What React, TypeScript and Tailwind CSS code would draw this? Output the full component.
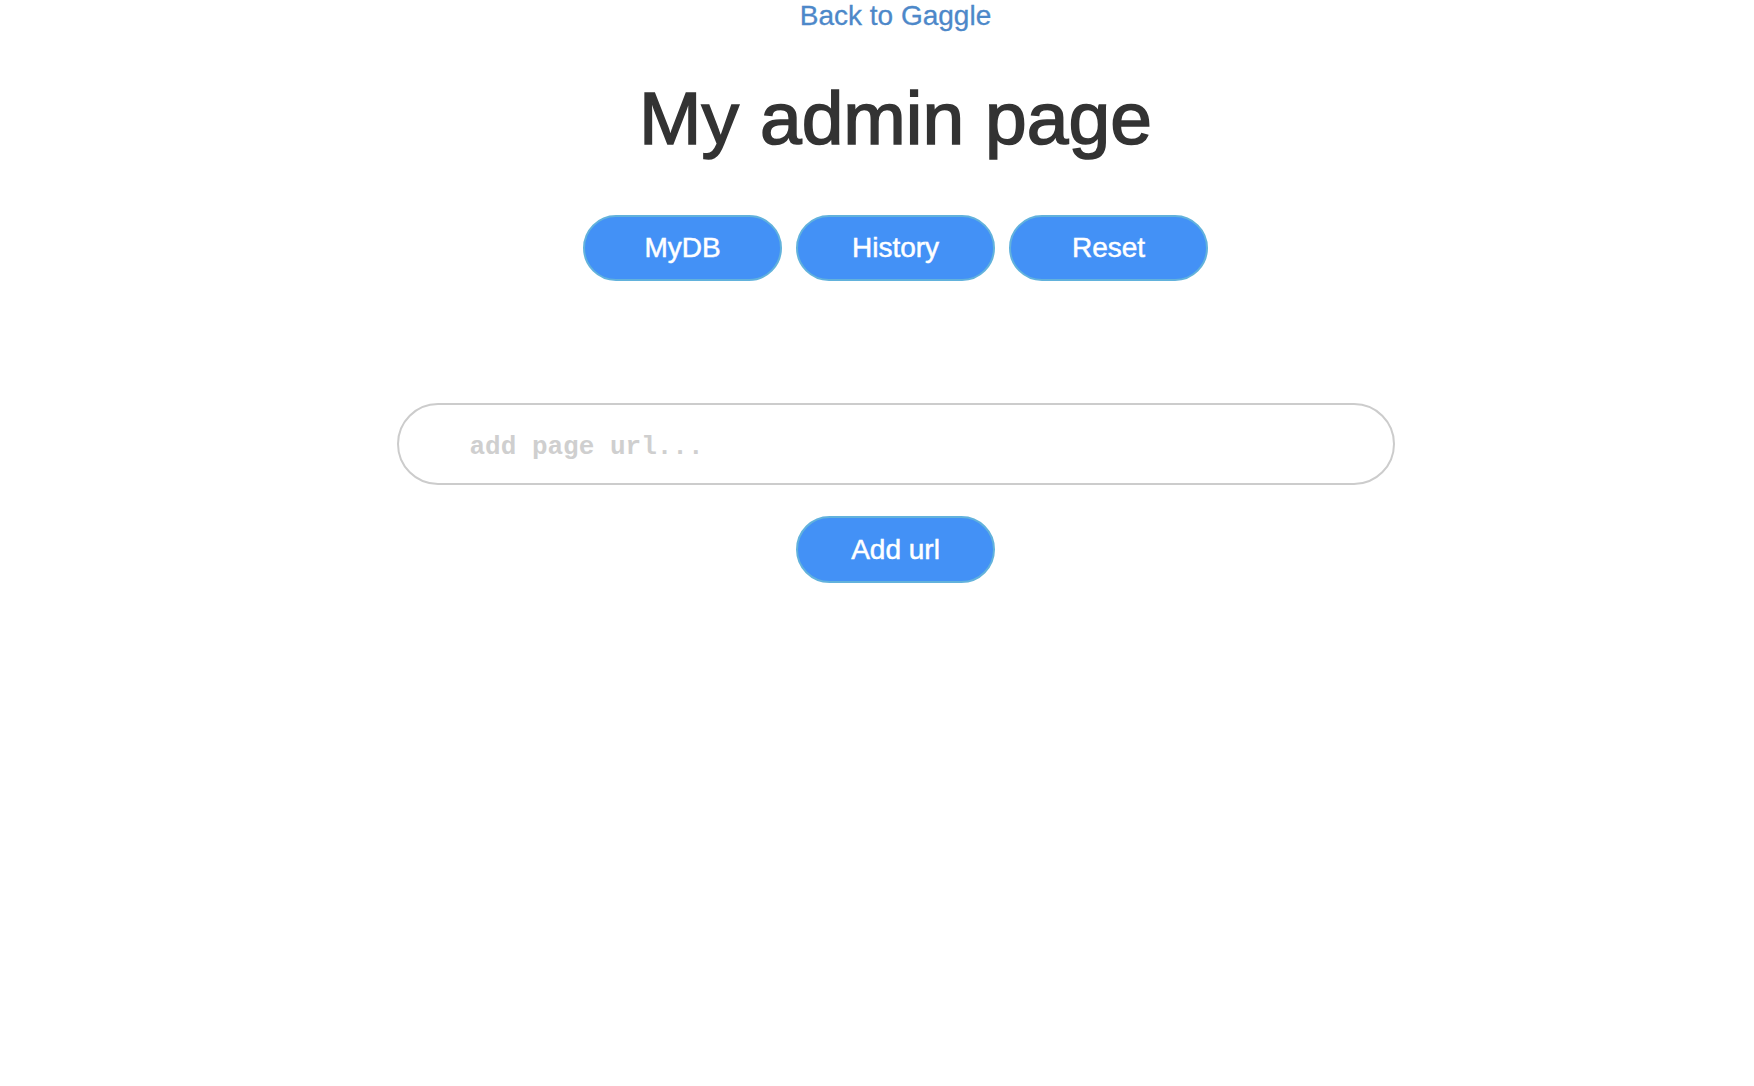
import React from "react";

export default function App() {
  const btn =
    "w-[199px] h-[66px] rounded-full bg-[#4391f6] border-2 border-[#62b2dc] text-white text-[28px] leading-none flex items-center justify-center [-webkit-text-stroke:0.5px_#ffffff]";
  return (
    <div
      className="min-h-[1086px] bg-white pl-[37px] flex flex-col items-center"
      style={{ fontFamily: '"Liberation Sans", Arial, Helvetica, sans-serif' }}
    >
      <a href="#" className="block text-[28px] leading-[32px] text-[#4d88c9] [-webkit-text-stroke:0.3px_#4d88c9]">
        Back to Gaggle
      </a>
      <h1 className="mt-[49px] text-[75px] leading-[75px] text-[#333333] font-normal [-webkit-text-stroke:1.6px_#333333]">
        My admin page
      </h1>
      <div className="mt-[59px] flex gap-[14px]">
        <button className={btn}>MyDB</button>
        <button className={btn}>History</button>
        <button className={btn}>Reset</button>
      </div>
      <input
        type="text"
        placeholder="add page url..."
        className="mt-[122px] w-[998px] h-[82px] rounded-full border-2 border-[#cccccc] pl-[71px] pr-8 pt-[5px] text-[26px] font-bold outline-none placeholder:text-[#cfcfcf] text-[#333]"
        style={{ fontFamily: '"Liberation Mono", "Courier New", monospace' }}
      />
      <button className={btn + " mt-[31px] !h-[67px]"}>Add url</button>
    </div>
  );
}
